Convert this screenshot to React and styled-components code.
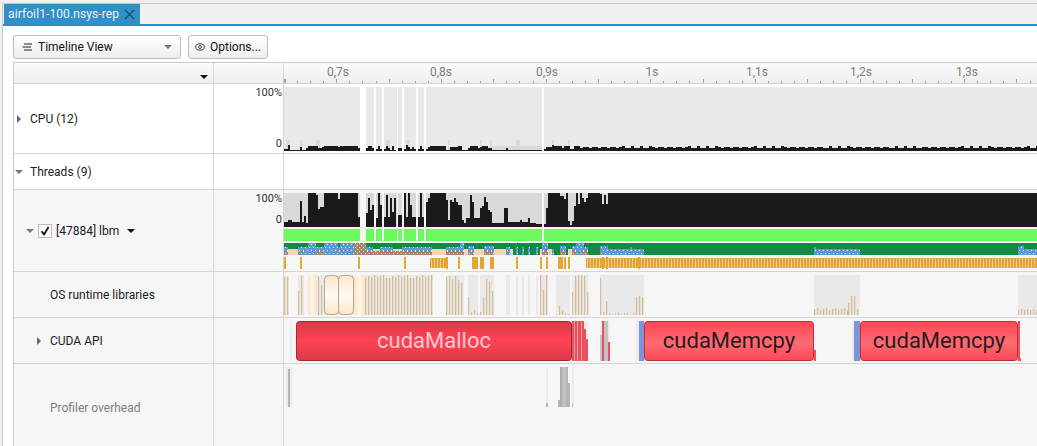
import styled, { createGlobalStyle } from "styled-components"

const GlobalStyle = createGlobalStyle`
    html, body {
        margin: 0;
        padding: 0;
        background: #f0f0f0;
        font-family: Roboto, "Liberation Sans", sans-serif;
        overflow: hidden;
    }
`
const Shell = styled.div`
    box-sizing: border-box;
    width: 1035px;
    height: 443px;
    margin: 3px 0 0 2px;
    border-top: 1px solid #c9c9c9;
    border-left: 1px solid #c9c9c9;
    background: #fff;
    overflow: hidden;
`
const TabStrip = styled.div`
    box-sizing: border-box;
    height: 22px;
    padding-left: 1px;
    background: #f0f0f0;
    border-bottom: 2px solid #2f8fcc;
    display: flex;
`
const Tab = styled.div`
    width: 136px;
    box-sizing: border-box;
    padding-left: 4px;
    display: flex;
    align-items: center;
    gap: 5px;
    background: #3290c8;
    color: #eaf4fa;
    font-size: 12px;
    letter-spacing: 0.1px;
    white-space: nowrap;
`
const Toolbar = styled.div`
    height: 36px;
    box-sizing: border-box;
    padding: 9px 0 0 10px;
    display: flex;
    gap: 7px;
`
const Button = styled.div`
    box-sizing: border-box;
    width: ${p => p.$width}px;
    height: 24px;
    padding: 0 ${p => p.$pad || 8}px;
    display: flex;
    align-items: center;
    gap: ${p => p.$gap || 5}px;
    border: 1px solid #bdbdbd;
    border-radius: 3px;
    background: linear-gradient(#ffffff, #eeeeee);
    font-size: 12px;
    color: #111;
`
const Spacer = styled.div`
    flex: 1;
`
const Caret = styled.span`
    display: inline-block;
    width: 0;
    height: 0;
    flex: none;
    margin-left: ${p => p.$push || 0}px;
    ${p => p.$dir === "right" ? `
        border-top: 4px solid transparent;
        border-bottom: 4px solid transparent;
        border-left: 4px solid ${p.$color || "#666"};
    ` : `
        border-left: 4px solid transparent;
        border-right: 4px solid transparent;
        border-top: 4px solid ${p.$color || "#777"};
    `}
`
const Table = styled.div`
    box-sizing: border-box;
    margin-left: 10px;
    border-top: 1px solid #c9c9c9;
    border-left: 1px solid #c9c9c9;
    width: 1024px;
    display: grid;
    grid-template-columns: 200px 70px 754px;
`
const Row = styled.div`
    display: contents;
    & > div {
        box-sizing: border-box;
        height: ${p => p.$height}px;
        border-bottom: ${p => p.$last ? "none" : "1px solid #d6d6d6"};
        background: ${p => p.$tone || "#fff"};
    }
`
const NameCell = styled.div`
    padding-left: ${p => p.$indent}px;
    padding-top: ${p => p.$offset || 0}px;
    border-right: 1px solid #d6d6d6;
    display: flex;
    align-items: center;
    gap: ${p => p.$gap || 0}px;
    font-size: 12px;
    color: ${p => p.$muted ? "#808080" : "#1c1c1c"};
`
const HeaderCell = styled.div`
    border-right: 1px solid #d6d6d6;
    display: flex;
    align-items: flex-end;
    justify-content: flex-end;
    padding: 0 5px 4px 0;
    background: linear-gradient(#fbfbfb, #eeeeee) !important;
`
const AxisCell = styled.div`
    border-right: 1px solid #d6d6d6;
    padding: 3px 1px 0 0;
    display: flex;
    flex-direction: column;
    align-items: flex-end;
    gap: ${p => p.$gap || 0}px;
    font-size: 11px;
    line-height: 12px;
    color: #333;
`
const ChartCell = styled.div`
    overflow: hidden;
    svg {
        display: block;
    }
`
const Label = styled.span`
    white-space: nowrap;
`
const CheckBox = styled.span`
    box-sizing: border-box;
    width: 14px;
    height: 14px;
    margin: 0 4px 0 4px;
    border: 1px solid #bbb;
    background: #fff;
    display: flex;
    align-items: center;
    justify-content: center;
`
const RulerCell = styled.div`
    background: linear-gradient(#fbfbfb, #eeeeee) !important;
    svg {
        display: block;
    }
`

const COUNTS = [[284, 360], [366, 374], [376, 382], [384, 397], [398, 402], [404, 416], [418, 424], [426, 542], [544, 1037]]

// [start, end, top] as read from the 3x crops
const CPU_BLACK = [[12,24,207],[24,30,195],[30,60,210],[60,66,201],[66,78,210],[78,84,204],[84,114,198],[114,126,204],[126,132,201],[132,174,198],[174,180,201],[180,234,198],[234,240,204],[258,264,204],[264,276,198],[276,282,204],[288,294,207],[294,300,198],[300,306,207],[312,318,207],[318,324,198],[324,330,204],[330,336,210],[336,342,198],[342,348,210],[354,366,204],[372,378,207],[378,384,195],[384,390,201],[390,396,207],[396,402,201],[402,408,207],[414,420,207],[420,426,198],[426,432,207],[438,444,207],[444,450,201],[450,498,198],[498,510,210],[510,534,201],[534,546,198],[546,564,210],[564,570,204],[570,594,198],[594,600,204],[600,606,201],[606,624,198],[624,636,204],[636,678,210],[678,684,204],[684,786,210],[792,798,207],[798,816,201],[816,822,195],[822,846,198],[846,852,204],[852,870,198],[870,882,207],[882,900,198]]
const CPU_LIGHT = [[18,30,180],[60,66,180],[108,120,180],[318,330,180],[378,390,180],[504,510,180],[600,606,180],[630,636,180],[708,720,180],[816,822,180],[864,870,180],[636,786,198]]

const LBM_A = [[12,24,112],[24,36,105],[36,60,112],[60,66,48],[66,72,112],[72,78,93],[78,84,115],[84,108,24],[108,114,30],[114,120,72],[120,132,66],[132,174,24],[174,180,42],[180,234,24],[234,240,96],[258,264,85],[264,270,40],[270,276,75],[276,282,60],[288,294,100],[294,300,25],[300,306,60],[312,318,95],[318,324,30],[324,330,95],[330,336,40],[336,342,80],[342,348,40],[354,366,90],[372,378,25],[378,384,95],[384,390,25],[390,396,60],[396,408,95],[414,420,95],[420,426,25],[426,432,95],[438,444,50],[444,450,40],[450,498,24],[498,504,45],[504,510,105],[510,516,45],[516,522,50],[522,528,40],[528,534,52],[534,546,60],[546,552,105],[552,558,115],[558,570,100],[570,576,30],[576,582,50],[582,600,100],[600,606,70],[606,612,62],[612,618,35],[618,624,50],[624,630,75],[630,636,80],[636,672,115],[672,684,70],[684,720,112],[720,726,105],[726,744,112],[744,750,100],[750,768,115],[768,786,118],[792,798,118],[798,804,70],[804,840,24]]
const LBM_B = [[0,6,33],[6,12,33],[12,18,42],[18,24,24],[24,30,108],[30,36,120],[36,42,108],[42,48,63],[48,54,24],[54,60,57],[60,66,24],[66,72,38],[72,78,51],[78,84,38],[84,120,24],[120,126,27],[126,132,57],[132,138,30],[138,144,57],[144,1440,24]]

const BLUE_A = [[12,24,186],[54,84,186],[84,108,174],[108,132,186],[132,174,174],[174,180,186],[180,222,174],[222,228,186],[258,280,186],[300,340,186],[366,384,186],[384,456,186],[498,546,186],[540,552,174],[564,582,183],[612,642,183],[678,690,186],[708,714,186],[726,732,186],[744,750,186],[768,774,186],[786,804,174],[816,822,192]]
const BLUE_B = [[0,18,183],[36,48,183],[48,72,174],[72,84,186],[120,144,183],[144,210,192],[210,216,186],[216,252,192],[762,768,186],[768,900,192],[1374,1380,186],[1380,1392,183],[1392,1431,192]]
const BROWN = [[12,24,198],[66,72,198],[108,132,198],[174,180,198],[222,258,174],[258,456,198],[498,552,198],[570,580,198],[612,640,198],[786,804,198]]
const BROWN_B = [[0,18,198],[36,48,198],[66,84,198],[120,126,198]]
const TICKS_A = [[12,18],[60,66],[234,240],[372,378],[498,504],[534,540],[576,594],[600,612],[630,642],[708,714],[780,786],[798,804],[834,843],[846,849],[852,858],[864,870]]
const TICKS_B = [[0,6],[12,18],[24,30],[126,132],[138,144],[234,240]]

// tan bars of the OS runtime row: [start, end, tops]
const OS_BARS = [
    [284, 288, [277]],
    [298, 304, [291, 276]],
    [318, 324, [277, 285]],
    [365, 432, [278, 276, 277, 275, 277, 276, 275, 278]],
    [446, 464, [277, 276, 279, 276, 280, 283]],
    [468, 478, [297, 312, 310, 313]],
    [480, 494, [312, 298, 279, 282, 291]],
    [540, 547, [275, 290]],
    [556, 570, [314, 306, 310, 313]],
    [572, 588, [292, 276, 275, 275, 276]],
    [600, 603, [278]],
    [603, 606, [312]],
    [606, 609, [301]],
    [609, 636, [313, 314, 313]],
    [636, 644, [297, 296]],
    [814, 848, [309, 308, 310]],
    [848, 860, [303, 296, 296, 309]],
    [1018, 1037, [310, 309]],
]
const OS_BANDS = [[284,288],[298,304],[308,365],[365,432],[446,464],[468,478],[480,494],[506,510],[516,518],[522,524],[528,530],[536,538],[540,547],[556,570],[572,588],[600,644],[814,860],[1018,1037]]

const A = z => 280 + z / 3
const B = z => 560 + z / 3

function Rects({ items, fill }) {
    return items.map(([x, y, w, h], i) => <rect key={i} x={x} y={y} width={w} height={h} fill={fill} />)
}

function topRects(list, toX, baseY, bottom) {
    return list.map(([a, b, t]) => [toX(a), baseY + t / 3, (b - a) / 3, bottom - baseY - t / 3])
}

function Chart({ top, height, children }) {
    return (
        <svg width="753" height={height} viewBox={`284 ${top} 753 ${height}`} shapeRendering="crispEdges">
            {children}
        </svg>
    )
}

function CpuChart() {
    // the far right only has low noise
    const tail = []
    for (let x = 580; x < 1037; x += 3) {
        const top = 146 + Math.round(Math.abs(Math.sin(x * 12.9)) * 2)
        tail.push([x, top, 3, 151 - top])
    }
    return (
        <Chart top={84} height={69}>
            <Rects items={COUNTS.map(([a, b]) => [a, 87, b - a, 64])} fill="#e9e9e9" />
            <Rects items={topRects(CPU_LIGHT, A, 80, 151)} fill="#d9d9d9" />
            <Rects items={topRects(CPU_BLACK, A, 80, 151)} fill="#1a1a1a" />
            <Rects items={tail} fill="#1a1a1a" />
        </Chart>
    )
}

function LbmChart() {
    return (
        <Chart top={190} height={81}>
            <defs>
                <pattern id="blueDots" width="8" height="6" patternUnits="userSpaceOnUse">
                    <rect width="8" height="6" fill="#5b9bd5" />
                    <rect x="1" y="1" width="1" height="1" fill="#fff" />
                    <rect x="5" y="1" width="1" height="1" fill="#fff" />
                    <rect x="3" y="4" width="1" height="1" fill="#fff" />
                    <rect x="7" y="4" width="1" height="1" fill="#fff" />
                </pattern>
                <pattern id="brownDots" width="4" height="4" patternUnits="userSpaceOnUse">
                    <rect width="4" height="4" fill="#a68572" />
                    <rect x="1" y="1" width="1" height="1" fill="#f6d6bf" />
                    <rect x="3" y="3" width="1" height="1" fill="#f6d6bf" />
                </pattern>
                <pattern id="orangeLines" width="3" height="12" patternUnits="userSpaceOnUse">
                    <rect width="3" height="12" fill="#e5a533" />
                    <rect x="2" width="1" height="12" fill="#edc580" />
                </pattern>
            </defs>
            <Rects items={COUNTS.map(([a, b]) => [a, 193, b - a, 34])} fill="#d9d9d9" />
            <Rects items={topRects(LBM_A, A, 185, 227)} fill="#1a1a1a" />
            <Rects items={topRects(LBM_B, B, 185, 227)} fill="#1a1a1a" />
            <Rects items={COUNTS.map(([a, b]) => [a, 229, b - a, 12])} fill="#6bf95e" />
            <rect x="284" y="243" width="753" height="12" fill="#128c45" />
            <Rects items={[[284, 249, 229, 6], [540, 249, 14, 6], [568, 249, 6, 6], [600, 249, 8, 6]]} fill="#fad3b7" />
            <Rects items={topRects(BLUE_A, A, 185, 255)} fill="url(#blueDots)" />
            <Rects items={topRects(BLUE_B, B, 185, 255)} fill="url(#blueDots)" />
            <Rects items={topRects(BROWN, A, 185, 255)} fill="url(#brownDots)" />
            <Rects items={topRects(BROWN_B, B, 185, 255)} fill="url(#brownDots)" />
            <rect x="430" y="258" width="16" height="10" fill="url(#orangeLines)" />
            <rect x="586" y="258" width="451" height="10" fill="url(#orangeLines)" />
            <Rects items={TICKS_A.map(([a, b]) => [A(a), 257, (b - a) / 3, 12])} fill="#e5a533" />
            <Rects items={TICKS_B.map(([a, b]) => [B(a), 257, (b - a) / 3, 12])} fill="#e5a533" />
        </Chart>
    )
}

function OsChart() {
    const bars = []
    const fringe = []
    OS_BARS.forEach(([a, b, tops]) => {
        let i = 0
        for (let x = a; x < b; x += 3) {
            const top = tops[i++ % tops.length]
            bars.push([x, top, 1, 315 - top])
            fringe.push([x + 1, top, 1, 315 - top])
        }
    })
    return (
        <Chart top={272} height={45}>
            <defs>
                <linearGradient id="creamV" x1="0" y1="0" x2="0" y2="1">
                    <stop offset="0" stopColor="#fde6c8" />
                    <stop offset="0.5" stopColor="#fffaf2" />
                    <stop offset="1" stopColor="#fde6c8" />
                </linearGradient>
                <linearGradient id="creamH" x1="0" y1="0" x2="1" y2="0">
                    <stop offset="0" stopColor="#fde3c4" />
                    <stop offset="0.5" stopColor="#fff6ea" />
                    <stop offset="1" stopColor="#fde3c4" />
                </linearGradient>
            </defs>
            <Rects items={OS_BANDS.map(([a, b]) => [a, 275, b - a, 40])} fill="#e9e9e9" />
            <Rects items={fringe} fill="#e8dfd0" />
            <Rects items={bars} fill="#d2bd9a" />
            <rect x="308" y="275" width="8" height="40" fill="url(#creamH)" />
            <rect x="354" y="275" width="11" height="40" fill="url(#creamH)" />
            <g shapeRendering="auto">
                <rect x="324.5" y="275.5" width="14" height="39" rx="4" fill="url(#creamV)" stroke="#b7a78d" />
                <rect x="338.5" y="275.5" width="15" height="39" rx="4" fill="url(#creamV)" stroke="#b7a78d" />
            </g>
        </Chart>
    )
}

function ApiBlock({ x, width, label, hot }) {
    const cx = x + width / 2
    return (
        <g shapeRendering="auto">
            <rect x={x + 0.5} y="321.5" width={width - 1} height="39" rx="3" fill={`url(#${hot ? "redDark" : "redLight"})`} stroke={hot ? "#a32a35" : "#b5323c"} />
            <text x={cx} y="348" textAnchor="middle" fontSize="22" fontFamily="Roboto, sans-serif" fill={hot ? "#ffc9d2" : "#2a1a1e"}>{label}</text>
        </g>
    )
}

function CudaChart() {
    return (
        <Chart top={318} height={45}>
            <defs>
                <linearGradient id="redDark" x1="0" y1="0" x2="0" y2="1">
                    <stop offset="0" stopColor="#dc3a47" />
                    <stop offset="0.5" stopColor="#ff4252" />
                    <stop offset="1" stopColor="#dc3a47" />
                </linearGradient>
                <linearGradient id="redLight" x1="0" y1="0" x2="0" y2="1">
                    <stop offset="0" stopColor="#ff4854" />
                    <stop offset="0.55" stopColor="#ff6a72" />
                    <stop offset="1" stopColor="#ff4854" />
                </linearGradient>
            </defs>
            <Rects items={[[290, 321, 2, 40], [572, 321, 16, 40], [600, 321, 10, 40], [636, 321, 8, 40], [852, 321, 8, 40]]} fill="#ececec" />
            <Rects items={[[572, 321, 12, 40], [584, 329, 2, 32], [586, 339, 2, 22], [602, 321, 2, 40], [608, 342, 2, 19]]} fill="#e8505c" />
            <Rects items={[[574, 321, 1, 40], [577, 321, 1, 40], [581, 321, 1, 40]]} fill="#f59aa2" />
            <Rects items={[[600, 335, 2, 26], [604, 321, 4, 40]]} fill="#c4c4c4" />
            <Rects items={[[639, 321, 5, 40], [854, 321, 6, 40]]} fill="#7d94d8" />
            <Rects items={[[814, 350, 2, 11], [1018, 321, 2, 40], [1020, 358, 1, 3]]} fill="#f0505c" />
            <ApiBlock x={296} width={276} label="cudaMalloc" hot />
            <ApiBlock x={644} width={170} label="cudaMemcpy" />
            <ApiBlock x={860} width={158} label="cudaMemcpy" />
        </Chart>
    )
}

function OverheadChart() {
    return (
        <Chart top={364} height={82}>
            <defs>
                <linearGradient id="overheadGray" x1="0" y1="0" x2="1" y2="0">
                    <stop offset="0" stopColor="#a8a8a8" />
                    <stop offset="0.5" stopColor="#c4c4c4" />
                    <stop offset="1" stopColor="#b0b0b0" />
                </linearGradient>
            </defs>
            <Rects items={[[286, 367, 6, 40], [546, 367, 2, 40], [572, 367, 2, 40]]} fill="#ebebeb" />
            <Rects items={[[288, 369, 2, 38], [546, 403, 2, 4], [558, 400, 2, 7], [568, 383, 2, 24], [572, 404, 1, 3]]} fill="#b6b6b6" />
            <rect x="560" y="367" width="8" height="40" fill="url(#overheadGray)" />
        </Chart>
    )
}

function Ruler() {
    const labels = [["0,7s", 338], ["0,8s", 441], ["0,9s", 547], ["1s", 652], ["1,1s", 757], ["1,2s", 861], ["1,3s", 967]]
    const ticks = []
    for (let i = 0; i < 58; i++) {
        const x = Math.round(284 + i * 13.08)
        const major = i % 4 === 0
        ticks.push([x, major ? 79 : 81, 1, major ? 4 : 2])
    }
    return (
        <RulerCell>
            <svg width="753" height="20" viewBox="284 63 753 20" shapeRendering="crispEdges">
                <Rects items={ticks} fill="#a0a0a0" />
                <rect x="284" y="79" width="2" height="4" fill="#a0a0a0" />
                {labels.map(([text, x]) => (
                    <text key={text} x={x} y="76" textAnchor="middle" fontSize="12" fontFamily="Roboto, sans-serif" fill="#7d7d7d" shapeRendering="auto">{text}</text>
                ))}
            </svg>
        </RulerCell>
    )
}

export default function App() {
    return (
        <>
            <GlobalStyle />
            <Shell>
                <TabStrip>
                    <Tab>
                        airfoil1-100.nsys-rep
                        <svg width="11" height="11" viewBox="0 0 11 11">
                            <path d="M1 1L10 10M10 1L1 10" stroke="#1c4a66" strokeWidth="1.2" fill="none" />
                        </svg>
                    </Tab>
                </TabStrip>
                <Toolbar>
                    <Button $width={168} $gap={5}>
                        <svg width="11" height="8" viewBox="0 0 11 8">
                            <path d="M2 1H10M0.5 4H9M2 7H10" stroke="#222" strokeWidth="1.2" fill="none" />
                        </svg>
                        <Label>Timeline View</Label>
                        <Spacer />
                        <Caret $color="#777" />
                    </Button>
                    <Button $width={80} $pad={6}>
                        <svg width="10" height="8" viewBox="0 0 10 8">
                            <ellipse cx="5" cy="4" rx="4.4" ry="3.2" fill="none" stroke="#444" strokeWidth="1" />
                            <circle cx="5" cy="4" r="1.5" fill="none" stroke="#444" strokeWidth="1" />
                        </svg>
                        <Label>Options...</Label>
                    </Button>
                </Toolbar>
                <Table>
                    <Row $height={21}>
                        <HeaderCell><Caret $color="#111" /></HeaderCell>
                        <HeaderCell />
                        <Ruler />
                    </Row>
                    <Row $height={70}>
                        <NameCell $indent={3} $gap={9}><Caret $dir="right" /><Label>CPU (12)</Label></NameCell>
                        <AxisCell $gap={39}><span>100%</span><span>0</span></AxisCell>
                        <ChartCell><CpuChart /></ChartCell>
                    </Row>
                    <Row $height={36}>
                        <NameCell $indent={1} $gap={7}><Caret /><Label>Threads (9)</Label></NameCell>
                        <AxisCell />
                        <ChartCell />
                    </Row>
                    <Row $height={82} $tone="#f6f6f6">
                        <NameCell $indent={12}>
                            <Caret />
                            <CheckBox>
                                <svg width="10" height="10" viewBox="0 0 10 10">
                                    <path d="M1.5 5.2L4 8.4L8.6 1" stroke="#111" strokeWidth="1.8" fill="none" />
                                </svg>
                            </CheckBox>
                            <Label>[47884] lbm</Label>
                            <Caret $color="#111" $push={8} />
                        </NameCell>
                        <AxisCell $gap={9}><span>100%</span><span>0</span></AxisCell>
                        <ChartCell><LbmChart /></ChartCell>
                    </Row>
                    <Row $height={46} $tone="#f6f6f6">
                        <NameCell $indent={36}><Label>OS runtime libraries</Label></NameCell>
                        <AxisCell />
                        <ChartCell><OsChart /></ChartCell>
                    </Row>
                    <Row $height={46} $tone="#f6f6f6">
                        <NameCell $indent={23} $gap={9}><Caret $dir="right" /><Label>CUDA API</Label></NameCell>
                        <AxisCell />
                        <ChartCell><CudaChart /></ChartCell>
                    </Row>
                    <Row $height={82} $tone="#f6f6f6" $last>
                        <NameCell $indent={36} $muted $offset={6}><Label>Profiler overhead</Label></NameCell>
                        <AxisCell />
                        <ChartCell><OverheadChart /></ChartCell>
                    </Row>
                </Table>
            </Shell>
        </>
    )
}
